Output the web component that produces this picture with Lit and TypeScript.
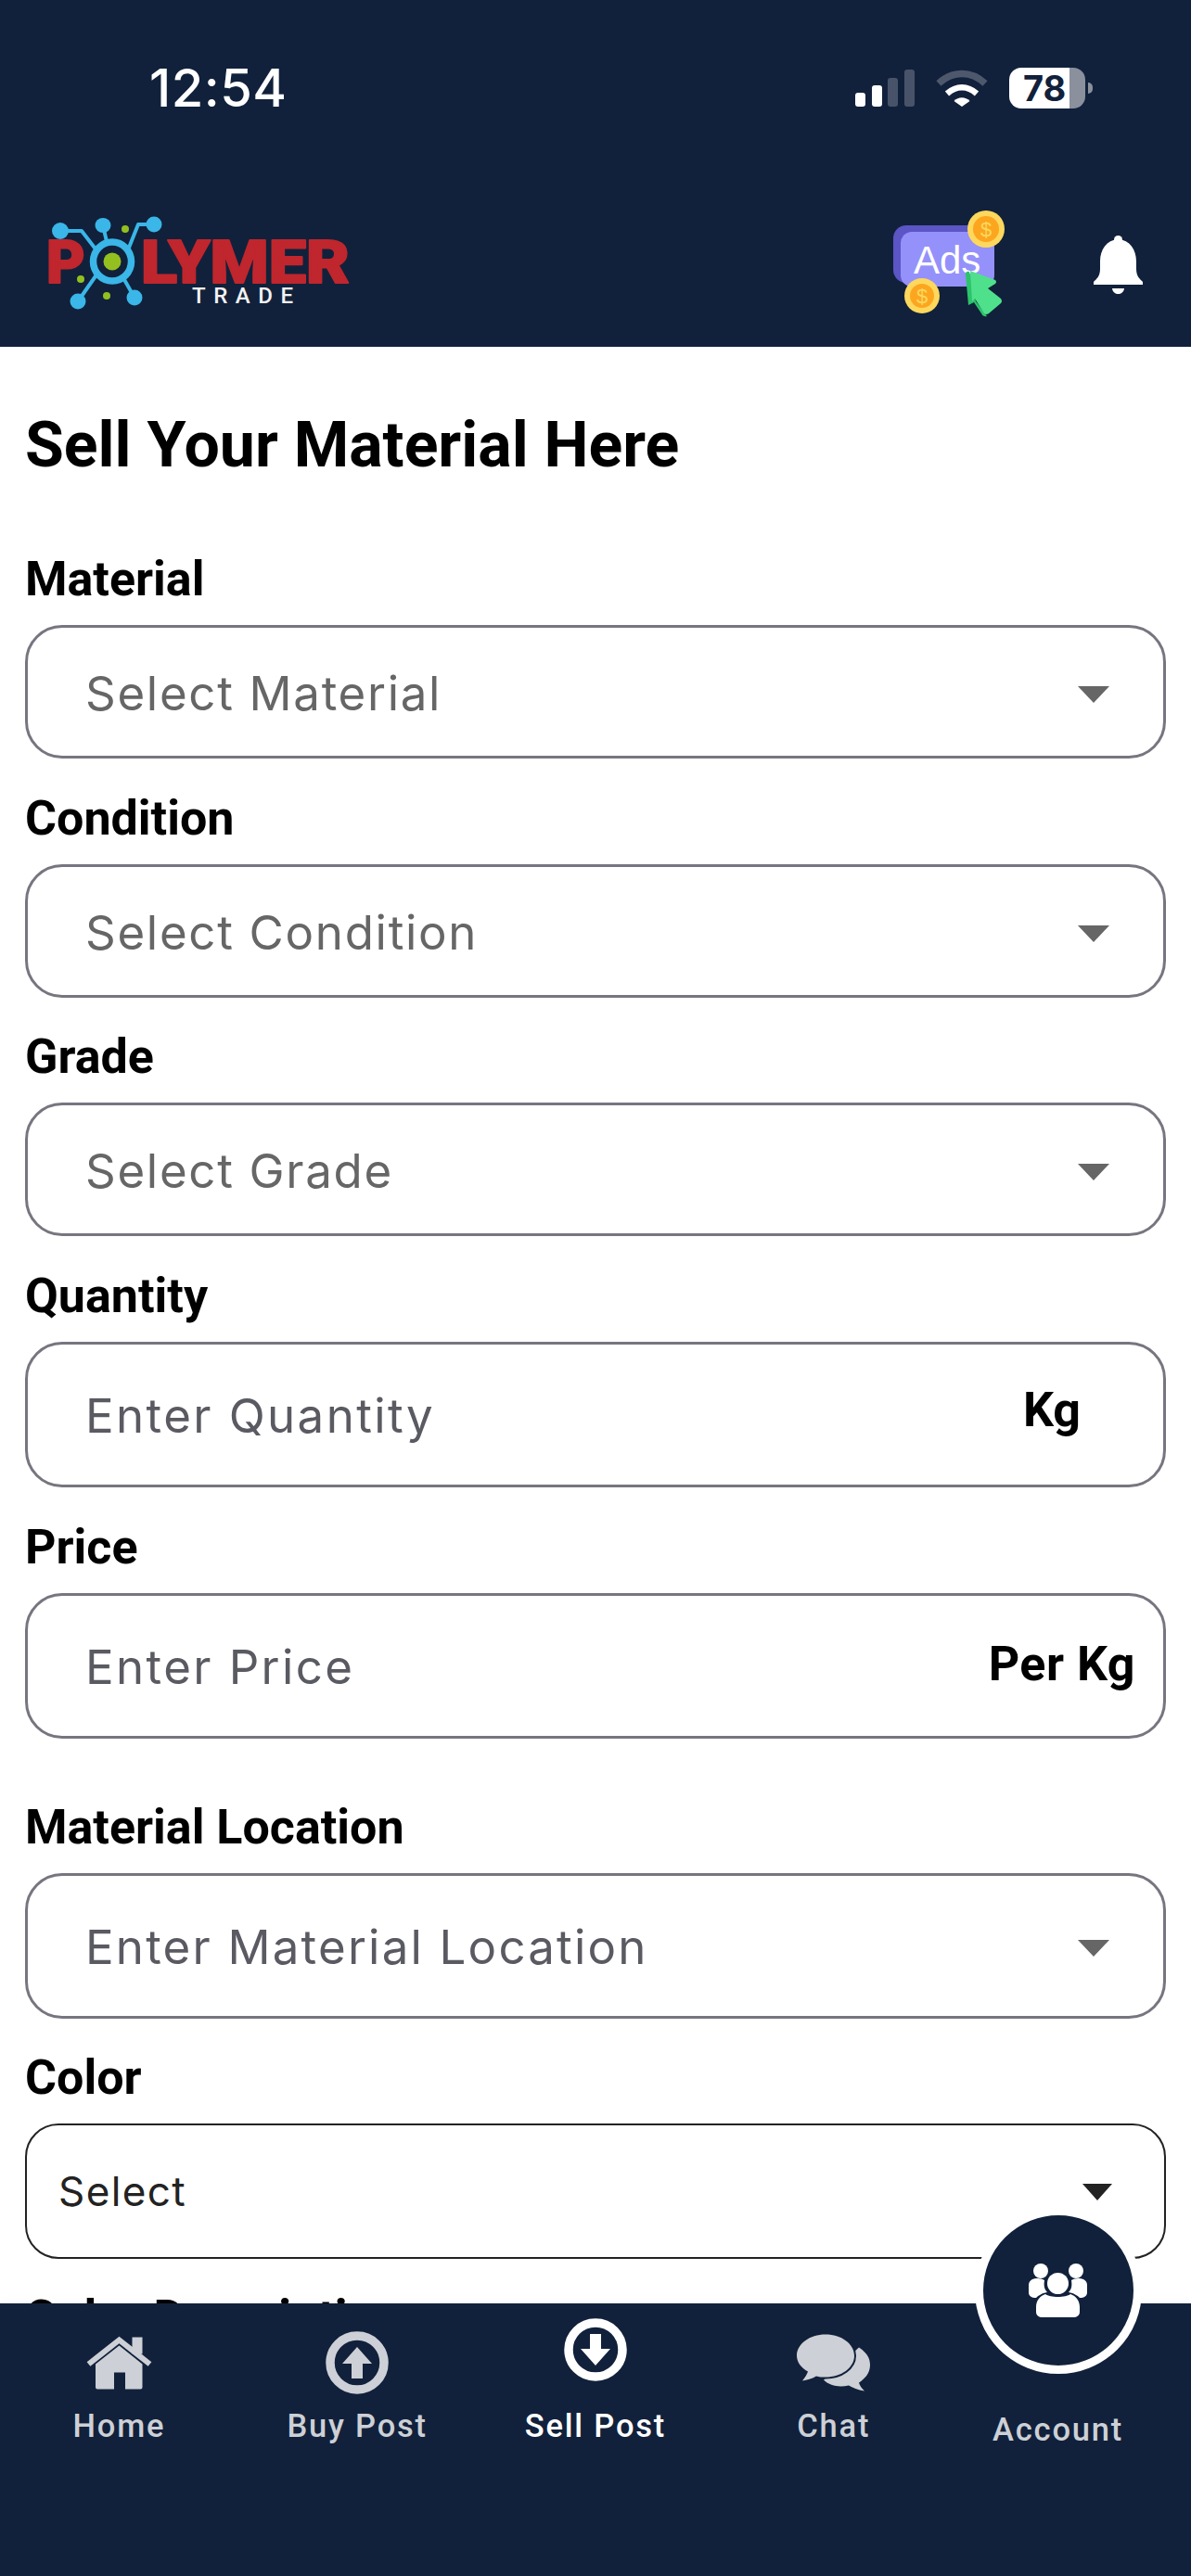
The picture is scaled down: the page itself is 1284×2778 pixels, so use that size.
import { LitElement, html, css, svg } from "lit";
import { customElement } from "lit/decorators.js";

const signal = html`<svg class="sig" width="64" height="40" viewBox="0 0 64 40">
  <rect x="0" y="25" width="11" height="15" rx="3" fill="#fff"/>
  <rect x="18" y="17" width="11" height="23" rx="3" fill="#fff"/>
  <rect x="35" y="9" width="11" height="31" rx="3" fill="#48536a"/>
  <rect x="53" y="0" width="11" height="40" rx="3" fill="#48536a"/>
</svg>`;
const wifi = html`<svg width="56" height="40" viewBox="0 0 56 40">
  <path d="M3 15 C18 1 38 1 53 15" fill="none" stroke="#4d586c" stroke-width="7.500"/>
  <path d="M12 26 C22 17 34 17 44 26" fill="none" stroke="#fff" stroke-width="6.500" />
  <path d="M19.500 34 C24 29 32 29 36.500 34 L28 40 Z" fill="#fff"/>
</svg>`;
const logo = html`<svg class="logo" width="350" height="120" viewBox="40 225 350 120">
  <g stroke="#3ab6e8" stroke-width="4" fill="none" stroke-linejoin="round">
    <path d="M65 249 H88 L108 275"/><path d="M111 243 L116 265"/>
    <path d="M166 242 H149 L137 272"/><path d="M84 325 L105 295"/><path d="M145 321 L132 298"/>
  </g>
  <text x="50" y="305" class="lg">P</text>
  <text x="152" y="305" class="lg" textLength="225" lengthAdjust="spacingAndGlyphs">LYMER</text>
  <text x="207" y="327" class="tr" textLength="109">TRADE</text>
  <g fill="#3ab6e8">
    <circle cx="65" cy="249" r="9"/><ellipse cx="111" cy="243" rx="8.500" ry="8"/><circle cx="166" cy="242" r="8.500"/>
    <circle cx="84" cy="325" r="8.500"/><circle cx="145" cy="321" r="8.500"/>
  </g>
  <ellipse cx="121" cy="282" rx="20.500" ry="21" fill="#11213b" stroke="#3ab6e8" stroke-width="7.500"/>
  <circle cx="121" cy="282" r="9.500" fill="#93c01f"/>
  <g fill="#93c01f"><circle cx="135" cy="247" r="4"/><circle cx="87" cy="301" r="4"/><circle cx="115" cy="319" r="4"/></g>
</svg>`;
const coin = (cx: number, cy: number, r: number) => svg`
  <circle cx=${cx} cy=${cy} r=${r} fill="#fdd85d"/>
  <circle cx=${cx} cy=${cy} r=${r - 6} fill="#fca61f"/>
  <text x=${cx} y=${cy + 8} text-anchor="middle" class="dollar">$</text>`;
const ads = html`<svg width="125" height="120" viewBox="960 225 125 120">
  <rect x="963" y="243" width="100" height="62" rx="14" fill="#5b55c5"/>
  <rect x="971" y="250" width="101" height="59" rx="12" fill="#9491fb"/>
  <text x="985" y="295" class="ads">Ads</text>
  ${coin(1063, 247, 20)}${coin(994, 319, 19)}
  <path d="M1041 296 Q1041 292 1045 293 L1052 325 L1064 341 Q1060 342 1058 338 L1050 326 L1044 329 Z" fill="#2bc46a"/>
  <path d="M1046 292 L1073 302 Q1075 304 1073 306 L1065 311 L1079 322 Q1081 325 1079 327 L1066 338 Q1063 340 1061 338 L1051 322 L1048 325 Z" fill="#4fe08c"/>
</svg>`;
const bell = html`<svg class="bell" width="53" height="63" viewBox="0 0 53 63">
  <circle cx="26.500" cy="4.500" r="4.500" fill="#fff"/>
  <path d="M26.500 4 C14 5 7 15 7 28 V36 C7 44 3 47 0 50 V53 H53 V50 C50 47 46 44 46 36 V28 C46 15 39 5 26.500 4 Z" fill="#fff"/>
  <path d="M20 57 H33 C32 65 21 65 20 57 Z" fill="#fff"/>
</svg>`;
const home = html`<svg width="71" height="57" viewBox="0 0 71 57">
  <rect x="49.500" y="1" width="11" height="18" fill="currentColor"/>
  <path d="M2.500 30 L35.500 4 L68.500 30" fill="none" stroke="currentColor" stroke-width="6"/>
  <path d="M35.500 10 L60.500 30 V55 Q60.500 57 58.500 57 H42 V39 H30 V57 H12 Q10 57 10 55 V30 Z" fill="currentColor"/>
</svg>`;
const up = html`<svg width="68" height="68" viewBox="0 0 68 68">
  <circle cx="34" cy="34" r="29" fill="none" stroke="currentColor" stroke-width="9.500"/>
  <path d="M34 17 L50 35 H40 V51 H28 V35 H18 Z" fill="currentColor"/>
</svg>`;
const down = html`<svg width="68" height="68" viewBox="0 0 68 68">
  <circle cx="34" cy="34" r="29" fill="none" stroke="currentColor" stroke-width="9.500"/>
  <path d="M34 51 L50 33 H40 V17 H28 V33 H18 Z" fill="currentColor"/>
</svg>`;
const chat = html`<svg width="79" height="61" viewBox="0 0 79 61">
  <path d="M67 14 C76 20 79 26 79 33 C79 42 73 48 67 52 C68 56 71 59 73 61 C66 60 60 57 56 55 C46 57 36 56 29 49 Z" fill="currentColor"/>
  <path d="M31 0 C48 0 62 10 62 23 C62 36 48 46 31 46 C27 46 24 46 21 45 C16 48 11 49 6 50 C9 46 11 43 12 40 C5 36 0 30 0 23 C0 10 14 0 31 0 Z" fill="currentColor" stroke="#11213b" stroke-width="4" paint-order="stroke"/>
</svg>`;
const users = html`<svg class="users" width="63" height="58" viewBox="0 0 63 58" fill="#fff">
  <circle cx="13" cy="8" r="8"/><circle cx="51" cy="8" r="8"/>
  <path d="M4 17 C8 15 14 16 17 18 C16 24 17 28 20 31 C14 32 10 35 8 37 C3 37 0 35 0 31 V23 C0 20 2 18 4 17 Z"/>
  <path d="M59 17 C55 15 49 16 46 18 C47 24 46 28 43 31 C49 32 53 35 55 37 C60 37 63 35 63 31 V23 C63 20 61 18 59 17 Z"/>
  <circle cx="31.500" cy="21.500" r="11.500"/>
  <path d="M18 33 C23 37 40 37 45 33 C51 35 55 40 55 47 V52 C55 56 52 58 48 58 H15 C11 58 8 56 8 52 V47 C8 40 12 35 18 33 Z"/>
</svg>`;
const caret = html`<span class="caret"></span>`;

@customElement("app-root")
export class AppRoot extends LitElement {
  static styles = css`
    :host { display: block; width: 1284px; height: 2778px; overflow: hidden; font-family: Roboto, "Liberation Sans", sans-serif; background: #fff; }
    .page { height: 2778px; display: flex; flex-direction: column; position: relative; }
    header { height: 374px; flex: none; background: #11213b; box-sizing: border-box; padding-top: 73px; }
    .status { height: 44px; display: flex; align-items: center; justify-content: space-between; padding: 0 106px 0 161px; }
    .time { font: 500 56px/48px Inter, sans-serif; letter-spacing: 0.5px; color: #fff; }
    .sys { display: flex; align-items: center; gap: 23px; }
    .sys svg { display: block; }
    .batt { position: relative; width: 82px; height: 44px; border-radius: 13px; background: linear-gradient(90deg, #fff 0 65px, #8a909c 65px); color: #11213b; font: 700 38px/44px Inter, sans-serif; padding-left: 15px; box-sizing: border-box; margin-right: 8px; }
    .batt::after { content: ""; position: absolute; left: 85px; top: 16px; width: 5px; height: 12px; border-radius: 0 6px 6px 0; background: #8a909c; }
    .appbar { margin-top: 108px; height: 120px; display: flex; align-items: center; justify-content: space-between; padding: 0 52px 0 40px; }
    .logo { display: block; }
    .right { display: flex; align-items: center; gap: 94px; }
    .right svg { display: block; }
    svg text.lg { font: 900 64px Roboto, sans-serif; fill: #c0262d; stroke: #c0262d; stroke-width: 2px; stroke-linejoin: round; }
    svg text.tr { font: 500 24px Roboto, sans-serif; fill: #f2f2f2; }
    svg text.ads { font: 400 42px "Liberation Sans", sans-serif; fill: #fff; }
    svg text.dollar { font: 400 22px "Liberation Sans", sans-serif; fill: #fdd85d; }
    main { flex: 1; min-height: 0; overflow: hidden; padding: 0 27px; box-sizing: border-box; }
    h1 { margin: 71px 0 0; font: 700 68px/70px Roboto, sans-serif; color: #000; }
    .group { margin-top: 34.670px; }
    .group.first { margin-top: 80px; }
    .group.wide { margin-top: 66px; }
    .group.last { margin-top: 34px; }
    label { display: block; height: 56px; font: 700 52px/60px Roboto, sans-serif; color: #000; margin-bottom: 23px; white-space: nowrap; }
    .field { box-sizing: border-box; height: 144px; border: 3px solid #77757f; border-radius: 40px; display: flex; align-items: center; justify-content: space-between; padding: 0 58px 0 62px; font: 400 51px/60px Inter, sans-serif; letter-spacing: 1.7px; color: #666; }
    .field.tall { height: 157px; color: #5a5a62; letter-spacing: 2.4px; }
    .field.tall.loc { letter-spacing: 2.2px; }
    .field .ph { position: relative; top: 2px; }
    .field.color { height: 146px; margin-top: 3px; border: 2px solid #222; border-radius: 36px; padding: 0 56px 0 34px; font-size: 44px; letter-spacing: 1.4px; color: #222; }
    .unit { font: 700 52px/56px Roboto, sans-serif; letter-spacing: 0; color: #000; position: relative; top: -4px; }
    .unit.kg { margin-right: 31px; }
    .unit.perkg { margin-right: -28px; top: -1px; letter-spacing: 0.5px; }
    .caret { width: 0; height: 0; border-left: 17px solid transparent; border-right: 17px solid transparent; border-top: 18px solid #666; margin-top: 6px; }
    .field.color .caret { border-top-color: #222; border-left-width: 16px; border-right-width: 16px; margin-top: 2px; }
    nav { position: relative; height: 294px; flex: none; background: #11213b; display: grid; grid-template-columns: repeat(5, 1fr); box-shadow: 0 -6px 10px rgba(0,0,0,.015); }
    .tab { position: relative; display: flex; flex-direction: column; align-items: center; color: #cdd0d6; font: 500 34.500px/40px Roboto, sans-serif; letter-spacing: 1.8px; }
    .tab svg { display: block; height: 68px; margin-top: 30px; margin-bottom: 14px; flex: none; }
    .tab.active { color: #fff; }
    .tab.active svg { margin-top: 16px; margin-bottom: 28px; }
    .tab.account { transform: translateX(-15px); justify-content: flex-start; padding-top: 116px; }
    .fab { position: absolute; left: 50%; top: -104px; margin-left: -90px; width: 180px; height: 180px; box-sizing: border-box; border-radius: 50%; background: #11213b; border: 9px solid #fff; display: flex; align-items: center; justify-content: center; }
    .fab .users { margin: 0; height: 58px; }
  `;

  private sel(label: string, ph: string, cls = "") {
    return html`<div class="group ${cls}"><label>${label}</label>
      <div class="field"><span class="ph">${ph}</span>${caret}</div></div>`;
  }

  render() {
    return html`<div class="page">
      <header>
        <div class="status">
          <span class="time">12:54</span>
          <div class="sys">${signal}${wifi}<div class="batt">78</div></div>
        </div>
        <div class="appbar">${logo}<div class="right">${ads}${bell}</div></div>
      </header>
      <main>
        <h1>Sell Your Material Here</h1>
        ${this.sel("Material", "Select Material", "first")}
        ${this.sel("Condition", "Select Condition")}
        ${this.sel("Grade", "Select Grade")}
        <div class="group"><label>Quantity</label>
          <div class="field tall"><span class="ph">Enter Quantity</span><span class="unit kg">Kg</span></div></div>
        <div class="group"><label>Price</label>
          <div class="field tall"><span class="ph">Enter Price</span><span class="unit perkg">Per Kg</span></div></div>
        <div class="group wide"><label>Material Location</label>
          <div class="field tall loc"><span class="ph">Enter Material Location</span>${caret}</div></div>
        <div class="group"><label>Color</label>
          <div class="field color"><span>Select</span>${caret}</div></div>
        <div class="group last"><label>Color Description</label></div>
      </main>
      <nav>
        <div class="tab">${home}<span>Home</span></div>
        <div class="tab">${up}<span>Buy Post</span></div>
        <div class="tab active">${down}<span>Sell Post</span></div>
        <div class="tab">${chat}<span>Chat</span></div>
        <div class="tab account"><div class="fab">${users}</div><span>Account</span></div>
      </nav>
    </div>`;
  }
}
